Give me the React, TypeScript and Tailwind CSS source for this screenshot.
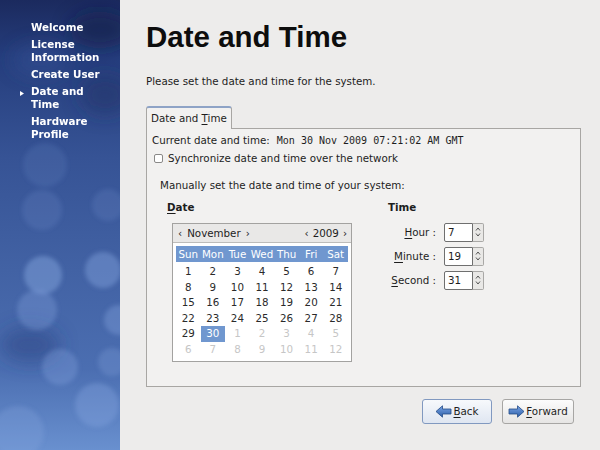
import React from "react";

const navItems: { lines: string[]; active?: boolean }[] = [
  { lines: ["Welcome"] },
  { lines: ["License", "Information"] },
  { lines: ["Create User"] },
  { lines: ["Date and", "Time"], active: true },
  { lines: ["Hardware", "Profile"] },
];

const weekDays = ["Sun", "Mon", "Tue", "Wed", "Thu", "Fri", "Sat"];

// [day, inCurrentMonth]
const weeks: [number, boolean][][] = [
  [[1, true], [2, true], [3, true], [4, true], [5, true], [6, true], [7, true]],
  [[8, true], [9, true], [10, true], [11, true], [12, true], [13, true], [14, true]],
  [[15, true], [16, true], [17, true], [18, true], [19, true], [20, true], [21, true]],
  [[22, true], [23, true], [24, true], [25, true], [26, true], [27, true], [28, true]],
  [[29, true], [30, true], [1, false], [2, false], [3, false], [4, false], [5, false]],
  [[6, false], [7, false], [8, false], [9, false], [10, false], [11, false], [12, false]],
];

function U({ children }: { children: React.ReactNode }) {
  return <span className="underline decoration-[1px] underline-offset-[2px]">{children}</span>;
}

function SidebarArt() {
  const bokeh = [
    { cx: 43, cy: 275, r: 19, o: 0.45 },
    { cx: 37, cy: 310, r: 20, o: 0.3 },
    { cx: 103, cy: 270, r: 18, o: 0.4 },
    { cx: 119, cy: 320, r: 15, o: 0.35 },
    { cx: 60, cy: 367, r: 18, o: 0.3 },
    { cx: 112, cy: 362, r: 14, o: 0.25 },
    { cx: 97, cy: 405, r: 22, o: 0.35 },
    { cx: 18, cy: 432, r: 26, o: 0.25 },
    { cx: 108, cy: 205, r: 16, o: 0.15 },
    { cx: 42, cy: 210, r: 20, o: 0.15 },
    { cx: 45, cy: 165, r: 22, o: 0.12 },
  ];
  return (
    <svg className="absolute inset-0" width="120" height="450" viewBox="0 0 120 450">
      <defs>
        <linearGradient id="side" x1="0" y1="0" x2="0" y2="1">
          <stop offset="0" stopColor="#1b2a5e" />
          <stop offset="0.12" stopColor="#253d7c" />
          <stop offset="0.35" stopColor="#365395" />
          <stop offset="0.6" stopColor="#4262a4" />
          <stop offset="0.82" stopColor="#4b6eb1" />
          <stop offset="1" stopColor="#6990cf" />
        </linearGradient>
        <filter id="soft" x="-50%" y="-50%" width="200%" height="200%">
          <feGaussianBlur stdDeviation="2" />
        </filter>
        <filter id="haze" x="-50%" y="-50%" width="200%" height="200%">
          <feGaussianBlur stdDeviation="9" />
        </filter>
      </defs>
      <rect width="120" height="450" fill="url(#side)" />
      <g filter="url(#haze)">
        <ellipse cx="100" cy="30" rx="30" ry="18" fill="#16214a" opacity="0.6" />
        <ellipse cx="30" cy="345" rx="30" ry="18" fill="#2a4282" opacity="0.5" />
        <ellipse cx="105" cy="95" rx="25" ry="20" fill="#1e3066" opacity="0.5" />
        <ellipse cx="40" cy="60" rx="28" ry="16" fill="#3a58a0" opacity="0.35" />
      </g>
      <g filter="url(#soft)">
        {bokeh.map((b, i) => (
          <circle key={i} cx={b.cx} cy={b.cy} r={b.r} fill="#8aaae3" opacity={b.o} />
        ))}
      </g>
    </svg>
  );
}

function Arrow({ dir }: { dir: "left" | "right" }) {
  const id = `arr-${dir}`;
  const d =
    dir === "left"
      ? "M1 6.5 L7.5 0.8 V4 H16 V9 H7.5 V12.2 Z"
      : "M16 6.5 L9.5 0.8 V4 H1 V9 H9.5 V12.2 Z";
  return (
    <svg width="17" height="13" viewBox="0 0 17 13">
      <defs>
        <linearGradient id={id} x1="0" y1="0" x2="0" y2="1">
          <stop offset="0" stopColor="#7aa5e6" />
          <stop offset="1" stopColor="#2c5ea8" />
        </linearGradient>
      </defs>
      <path d={d} fill={`url(#${id})`} stroke="#244b86" strokeWidth="0.8" strokeLinejoin="round" />
    </svg>
  );
}

function SpinBox({ value }: { value: string }) {
  return (
    <div className="flex h-[19px]">
      <div className="w-[29px] h-full bg-white border border-[#6f6f6f] rounded-l-[2px] pl-[3px] flex items-center text-[#1d1d1d]">
        {value}
      </div>
      <div className="w-[11px] h-full flex flex-col items-center justify-center gap-[2px] bg-[#e9e8e6] border border-l-0 border-[#a9a8a6] rounded-r-[2px]">
        <svg width="6" height="4" viewBox="0 0 6 4">
          <polyline points="1,3.5 3,1 5,3.5" fill="none" stroke="#555" strokeWidth="1" />
        </svg>
        <svg width="6" height="4" viewBox="0 0 6 4">
          <polyline points="1,0.5 3,3 5,0.5" fill="none" stroke="#555" strokeWidth="1" />
        </svg>
      </div>
    </div>
  );
}

function Calendar() {
  return (
    <div className="ml-[5px] mt-[9px] w-[180px] h-[139px] bg-white border border-[#a3a2a0] flex flex-col">
      <div className="h-[19px] bg-[#e9e8e7] border-b border-[#bdbcba] flex items-center justify-between pl-[5px] pr-[4px] text-[#1d1d1d]">
        <div className="flex items-center gap-[5px]">
          <span>‹</span>
          <span>November</span>
          <span>›</span>
        </div>
        <div className="flex items-center gap-[4px]">
          <span>‹</span>
          <span>2009</span>
          <span>›</span>
        </div>
      </div>
      <div className="mx-[3px] mt-[3px] h-[16px] bg-[#7097cf] grid grid-cols-7 items-center text-white">
        {weekDays.map((d) => (
          <span key={d} className="text-center">
            {d}
          </span>
        ))}
      </div>
      <div className="mx-[3px] mt-[2px] flex flex-col">
        {weeks.map((week, wi) => (
          <div key={wi} className="grid grid-cols-7 h-[15.6px]">
            {week.map(([day, current], di) => {
              const selected = current && day === 30;
              return (
                <span
                  key={di}
                  className={
                    selected
                      ? "text-center leading-[15.6px] bg-[#7097cf] text-white"
                      : current
                      ? "text-center leading-[15.6px] text-[#2a2a2a]"
                      : "text-center leading-[15.6px] text-[#c6c6c6]"
                  }
                >
                  {day}
                </span>
              );
            })}
          </div>
        ))}
      </div>
    </div>
  );
}

export default function App() {
  return (
    <div className="flex w-[600px] h-[450px] bg-[#edeceb] font-['DejaVu_Sans',sans-serif] text-[10.3px] leading-[13px] text-[#1d1d1d] overflow-hidden">
      <aside className="relative w-[120px] h-full shrink-0 overflow-hidden">
        <SidebarArt />
        <nav className="relative flex flex-col gap-[4px] pt-[20.5px] text-white font-bold">
          {navItems.map((item) => (
            <div key={item.lines.join(" ")} className="flex">
              <div className="w-[31px] shrink-0 flex justify-end pr-[7px] pt-[6px]">
                {item.active && (
                  <svg width="4" height="5" viewBox="0 0 4 5">
                    <polygon points="0,0 4,2.5 0,5" fill="#fff" />
                  </svg>
                )}
              </div>
              <div className="flex flex-col">
                {item.lines.map((l) => (
                  <span key={l}>{l}</span>
                ))}
              </div>
            </div>
          ))}
        </nav>
      </aside>

      <main className="flex-1 flex flex-col pl-[26px] pr-[19px] pt-[22px]">
        <h1 className="font-['Liberation_Sans',sans-serif] font-bold text-[29.5px] leading-none text-[#0d0d0d]">
          Date and Time
        </h1>
        <p className="mt-[23.5px]">Please set the date and time for the system.</p>

        <div className="mt-[18px] flex">
          <div className="relative z-10 -mb-px h-[23px] px-[4px] pt-[4px] bg-[#f2f1f0] border border-b-0 border-[#a8a6a3] border-t-2 border-t-[#8ea3c6] rounded-t-[3px]">
            Date and <U>T</U>ime
          </div>
        </div>
        <section className="h-[259px] bg-[#f2f1f0] border border-[#a8a6a3] pl-[5px] pt-[5px] flex flex-col">
          <div className="flex items-baseline gap-[7px]">
            <span>Current date and time:</span>
            <span className="font-['DejaVu_Sans_Mono',monospace] text-[10px]">
              Mon 30 Nov 2009 07:21:02 AM GMT
            </span>
          </div>
          <div className="mt-[5px] flex items-center">
            <span className="ml-[2px] w-[9px] h-[9px] bg-white border border-[#8a8988] rounded-[2px]" />
            <span className="ml-[5px]">Synchronize date and time over the network</span>
          </div>
          <p className="mt-[13.5px] ml-[8px]">Manually set the date and time of your system:</p>

          <div className="mt-[9.5px] ml-[15px] flex">
            <div className="w-[221px] flex flex-col">
              <span className="font-bold">
                <U>D</U>ate
              </span>
              <Calendar />
            </div>
            <div className="flex flex-col">
              <span className="font-bold">Time</span>
              <div className="mt-[8.5px] grid grid-cols-[48px_auto] gap-x-[8px] gap-y-[5px] items-center">
                <span className="text-right">
                  <U>H</U>our :
                </span>
                <SpinBox value="7" />
                <span className="text-right">
                  <U>M</U>inute :
                </span>
                <SpinBox value="19" />
                <span className="text-right">
                  <U>S</U>econd :
                </span>
                <SpinBox value="31" />
              </div>
            </div>
          </div>
        </section>

        <div className="mt-[12px] mr-[7px] flex justify-end gap-[10px]">
          <button className="w-[70px] h-[25px] flex items-center justify-center gap-[1px] rounded-[3px] border border-[#8199c0] bg-gradient-to-b from-[#f7f9fc] to-[#dfe6f1] text-[#1d1d1d]">
            <Arrow dir="left" />
            <span>
              <U>B</U>ack
            </span>
          </button>
          <button className="w-[72px] h-[25px] flex items-center justify-center gap-[1px] rounded-[3px] border border-[#a7a6a4] bg-gradient-to-b from-[#fcfcfc] to-[#e6e5e4] text-[#1d1d1d]">
            <Arrow dir="right" />
            <span>
              <U>F</U>orward
            </span>
          </button>
        </div>
      </main>
    </div>
  );
}
